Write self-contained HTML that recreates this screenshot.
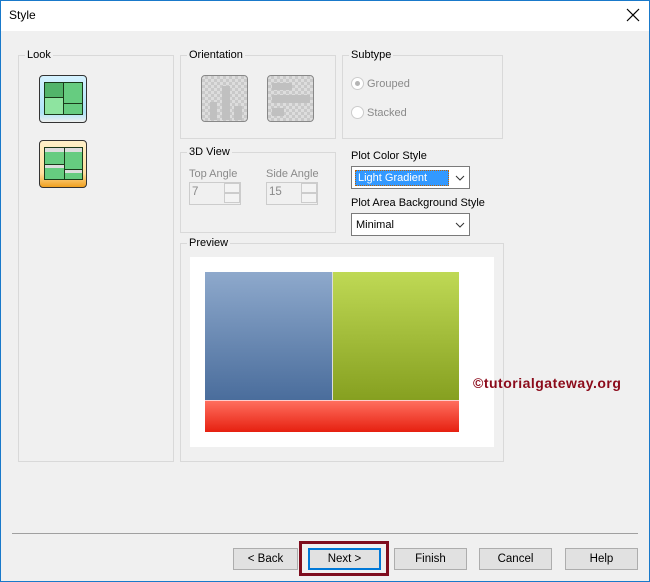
<!DOCTYPE html>
<html><head><style>
*{box-sizing:border-box;margin:0;padding:0}
body{width:650px;height:582px;background:#f0f0f0;font-family:"Liberation Sans",sans-serif;font-size:11px;color:#000;position:relative;overflow:hidden}
.a{position:absolute}
.frame{position:absolute;left:0;top:0;width:650px;height:582px;border:1px solid #1979ca;pointer-events:none}
.grp{position:absolute;border:1px solid #d9d9d9}
.lbl{position:absolute;background:#f0f0f0;padding:0 2px;top:-7px;left:6px;line-height:13px}
.btn{position:absolute;top:548px;height:22px;background:#e1e1e1;border:1px solid #adadad;text-align:center;line-height:20px;font-size:11.5px}
.dis{color:#8a8a8a}
.combo{position:absolute;width:119px;height:23px;background:#fff;border:1px solid #7a7a7a}
.spin{position:absolute;width:52px;height:23px;border:1px solid #ccc;background:#f0f0f0;color:#8a8a8a;padding:3px 0 0 2px;font-size:11.5px}
.spin .b{position:absolute;right:0;width:16px;height:10px;border:1px solid #ccc;background:#f3f3f3}
.ori{position:absolute;width:47px;height:47px;border:1px solid #888;border-radius:4px;background-color:#ddd;background-image:linear-gradient(45deg,#c9c9c9 25%,transparent 25%,transparent 75%,#c9c9c9 75%),linear-gradient(45deg,#c9c9c9 25%,transparent 25%,transparent 75%,#c9c9c9 75%);background-size:6px 6px;background-position:0 0,3px 3px}
</style></head><body>
<div class="a" style="left:0;top:0;width:650px;height:31px;background:#fff"></div>
<div class="a" style="left:9px;top:8px;font-size:12px">Style</div>
<svg class="a" style="left:626px;top:8px" width="14" height="14"><path d="M1 1L13 13M13 1L1 13" stroke="#000" stroke-width="1.2"/></svg>

<div class="grp" style="left:18px;top:55px;width:156px;height:407px"><div class="lbl">Look</div></div>
<div class="a" style="left:39px;top:75px;width:48px;height:48px;border:1px solid #333;border-radius:4px;background:linear-gradient(#d5f2ff,#b0e4f8 80%,#eee)">
 <div class="a" style="left:4px;top:6px;width:39px;height:33px;border:1px solid #1a3a1a;background:#66cc80">
  <div class="a" style="left:0;top:0;width:19px;height:15px;background:#52b46a;border-right:1px solid #1a3a1a;border-bottom:1px solid #1a3a1a"></div>
  <div class="a" style="left:0;top:15px;width:19px;height:16px;background:#8ee4a0;border-right:1px solid #1a3a1a"></div>
  <div class="a" style="left:19px;top:20px;width:18px;height:1px;background:#1a3a1a"></div>
 </div></div>
<div class="a" style="left:39px;top:140px;width:48px;height:48px;border:1px solid #333;border-radius:4px;background:linear-gradient(#fff0c8,#ffe0a0 70%,#f0a020)">
 <div class="a" style="left:4px;top:6px;width:39px;height:33px;border:1px solid #1a3a1a;background:#66cc80">
  <div class="a" style="left:0;top:0;width:37px;height:4px;background:#ddd"></div>
  <div class="a" style="left:0;top:16px;width:19px;height:4px;background:#ddd;border-top:1px solid #1a3a1a"></div>
  <div class="a" style="left:19px;top:0;width:1px;height:31px;background:#1a3a1a"></div>
  <div class="a" style="left:20px;top:21px;width:17px;height:4px;background:#ddd;border-top:1px solid #1a3a1a"></div>
 </div></div>

<div class="grp" style="left:180px;top:55px;width:156px;height:84px"><div class="lbl">Orientation</div></div>
<div class="ori" style="left:201px;top:75px"><div class="a" style="left:8px;top:26px;width:7px;height:18px;background:#c0c0c0"></div><div class="a" style="left:20px;top:10px;width:8px;height:34px;background:#c0c0c0"></div><div class="a" style="left:32px;top:30px;width:8px;height:14px;background:#c0c0c0"></div></div>
<div class="ori" style="left:267px;top:75px"><div class="a" style="left:4px;top:7px;width:20px;height:7px;background:#c0c0c0"></div><div class="a" style="left:4px;top:19px;width:38px;height:8px;background:#c0c0c0"></div><div class="a" style="left:4px;top:32px;width:12px;height:8px;background:#c0c0c0"></div></div>

<div class="grp" style="left:342px;top:55px;width:161px;height:84px"><div class="lbl">Subtype</div></div>
<div class="a dis" style="left:351px;top:77px;width:13px;height:13px;border:1px solid #ccc;border-radius:50%;background:#fff"><div class="a" style="left:3px;top:3px;width:5px;height:5px;border-radius:50%;background:#b5b5b5"></div></div>
<div class="a dis" style="left:367px;top:78px">Grouped</div>
<div class="a" style="left:351px;top:106px;width:13px;height:13px;border:1px solid #ccc;border-radius:50%;background:#fff"></div>
<div class="a dis" style="left:367px;top:107px">Stacked</div>

<div class="grp" style="left:180px;top:152px;width:156px;height:81px"><div class="lbl">3D View</div></div>
<div class="a dis" style="left:189px;top:168px">Top Angle</div>
<div class="a dis" style="left:266px;top:168px">Side Angle</div>
<div class="spin" style="left:189px;top:182px">7<div class="b" style="top:0"></div><div class="b" style="top:10px"></div></div>
<div class="spin" style="left:266px;top:182px">15<div class="b" style="top:0"></div><div class="b" style="top:10px"></div></div>

<div class="a" style="left:351px;top:150px">Plot Color Style</div>
<div class="combo" style="left:351px;top:166px"><div class="a" style="left:3px;top:3px;width:94px;height:16px;background:#3399ff;border:1px dotted #c06000;color:#fff;padding-left:2px;line-height:14px">Light Gradient</div>
<svg class="a" style="left:103px;top:8px" width="10" height="6"><path d="M1 1L5 5L9 1" fill="none" stroke="#333"/></svg></div>
<div class="a" style="left:351px;top:197px">Plot Area Background Style</div>
<div class="combo" style="left:351px;top:213px"><div class="a" style="left:4px;top:5px">Minimal</div>
<svg class="a" style="left:103px;top:8px" width="10" height="6"><path d="M1 1L5 5L9 1" fill="none" stroke="#333"/></svg></div>

<div class="grp" style="left:180px;top:243px;width:324px;height:219px"><div class="lbl">Preview</div></div>
<div class="a" style="left:190px;top:257px;width:304px;height:190px;background:#fff"></div>
<div class="a" style="left:205px;top:272px;width:127px;height:128px;background:linear-gradient(#8ea9cc,#4a6d9c)"></div>
<div class="a" style="left:332px;top:272px;width:127px;height:128px;background:linear-gradient(#bfd955,#86a020);border-left:1px solid #ddd"></div>
<div class="a" style="left:205px;top:400px;width:254px;height:32px;background:linear-gradient(#ff6e5e,#e62010);border-top:1px solid #fcc"></div>
<div class="a" style="left:473px;top:375px;color:#8b0a1a;font-weight:bold;font-size:14px;letter-spacing:0.5px;font-family:'Liberation Sans',sans-serif">©tutorialgateway.org</div>

<div class="a" style="left:12px;top:533px;width:626px;height:1px;background:#a0a0a0"></div>
<div class="btn" style="left:233px;width:65px">&lt; Back</div>
<div class="a" style="left:299px;top:541px;width:90px;height:35px;border:3px solid #7f0d1e"></div>
<div class="btn" style="left:308px;width:73px;border:2px solid #0078d7;line-height:18px">Next &gt;</div>
<div class="btn" style="left:394px;width:73px">Finish</div>
<div class="btn" style="left:479px;width:73px">Cancel</div>
<div class="btn" style="left:565px;width:73px">Help</div>
<div class="frame"></div>
</body></html>
